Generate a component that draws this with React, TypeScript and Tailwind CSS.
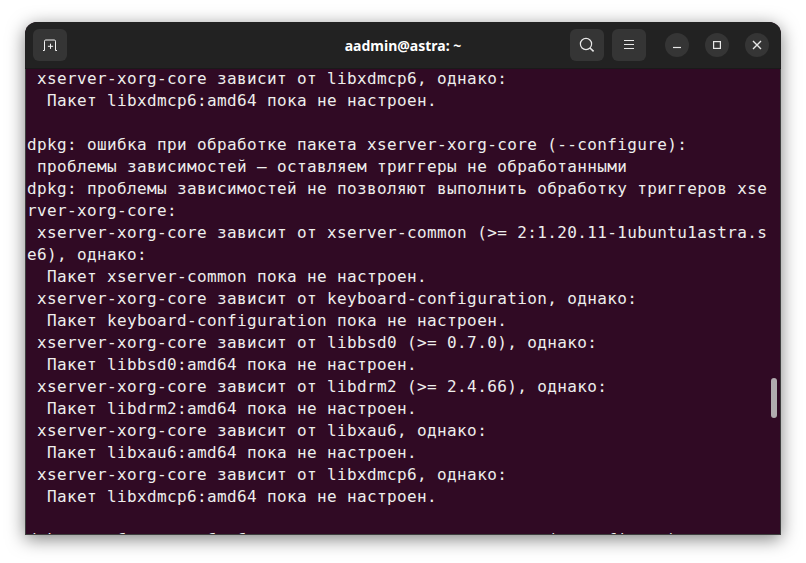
const lines = [
  " xserver-xorg-core зависит от libxdmcp6, однако:",
  "  Пакет libxdmcp6:amd64 пока не настроен.",
  "",
  "dpkg: ошибка при обработке пакета xserver-xorg-core (--configure):",
  " проблемы зависимостей — оставляем триггеры не обработанными",
  "dpkg: проблемы зависимостей не позволяют выполнить обработку триггеров xse",
  "rver-xorg-core:",
  " xserver-xorg-core зависит от xserver-common (>= 2:1.20.11-1ubuntu1astra.s",
  "e6), однако:",
  "  Пакет xserver-common пока не настроен.",
  " xserver-xorg-core зависит от keyboard-configuration, однако:",
  "  Пакет keyboard-configuration пока не настроен.",
  " xserver-xorg-core зависит от libbsd0 (>= 0.7.0), однако:",
  "  Пакет libbsd0:amd64 пока не настроен.",
  " xserver-xorg-core зависит от libdrm2 (>= 2.4.66), однако:",
  "  Пакет libdrm2:amd64 пока не настроен.",
  " xserver-xorg-core зависит от libxau6, однако:",
  "  Пакет libxau6:amd64 пока не настроен.",
  " xserver-xorg-core зависит от libxdmcp6, однако:",
  "  Пакет libxdmcp6:amd64 пока не настроен.",
  "",
];

export default function App() {
  return (
    <div className="w-[806px] h-[563px] bg-white pt-[22px] pl-[25px] overflow-hidden">
      <div className="w-[756px] h-[513px] flex flex-col rounded-t-[12px] bg-[#300a24] shadow-[0_4px_18px_rgba(0,0,0,0.5)]">
        <header className="h-[47px] shrink-0 rounded-t-[12px] bg-[#222222] border-b border-[#1a1a1a] grid grid-cols-[1fr_auto_1fr] items-center pl-2 pr-3">
          <div className="flex">
            <button className="w-[34px] h-[32px] rounded-[6px] bg-[#353535] flex items-center justify-center">
              <svg width="16" height="16" viewBox="0 0 16 16" fill="none" stroke="#f2f2f2" strokeWidth="1">
                <path d="M1 13.5h1.5V4.2q0-1.2 1.2-1.2h8.6q1.2 0 1.2 1.2v9.3H15" />
                <path d="M8.5 6.7v5.2M5.9 9.3h5.2" />
              </svg>
            </button>
          </div>
          <div className="text-center text-white text-[14px] font-bold font-['Noto_Sans',sans-serif] pl-[4px]">aadmin@astra: ~</div>
          <div className="flex items-center justify-end">
            <button className="w-[34px] h-[32px] rounded-[6px] bg-[#353535] flex items-center justify-center">
              <svg width="16" height="16" viewBox="0 0 16 16" fill="none" stroke="#e8e8e8" strokeWidth="1.2">
                <circle cx="7" cy="7" r="5.6" />
                <path d="M11 11l3.6 3.4" strokeWidth="1.6" />
              </svg>
            </button>
            <button className="ml-2 w-[34px] h-[32px] rounded-[6px] bg-[#353535] flex items-center justify-center">
              <svg width="12" height="10" viewBox="0 0 12 10" fill="none" stroke="#e8e8e8" strokeWidth="1">
                <path d="M1 .5h10M1 4.5h10M1 8.5h10" />
              </svg>
            </button>
            <button className="ml-[19px] w-6 h-6 rounded-full bg-[#353535] flex items-center justify-center">
              <svg width="10" height="10" viewBox="0 0 10 10" fill="none" stroke="#e8e8e8" strokeWidth="1.2">
                <path d="M1 7.5h8" />
              </svg>
            </button>
            <button className="ml-4 w-6 h-6 rounded-full bg-[#353535] flex items-center justify-center">
              <svg width="10" height="10" viewBox="0 0 10 10" fill="none" stroke="#e8e8e8" strokeWidth="1.2">
                <rect x="1.6" y="1.6" width="6.8" height="6.8" />
              </svg>
            </button>
            <button className="ml-4 w-6 h-6 rounded-full bg-[#353535] flex items-center justify-center">
              <svg width="10" height="10" viewBox="0 0 10 10" fill="none" stroke="#e8e8e8" strokeWidth="1.4">
                <path d="M1 1l8 8M9 1l-8 8" />
              </svg>
            </button>
          </div>
        </header>
        <main className="relative flex-1 overflow-hidden border-x border-b border-[#3e3e3e] pl-px text-[#eeeeec] font-['DejaVu_Sans_Mono',monospace] text-[16px] tracking-[0.37px] leading-[22px]">
          <div className="-mt-px">
            {lines.map((l, i) => (
              <div key={i} className="h-[22px] whitespace-pre">{l}</div>
            ))}
            <div className="-mt-px h-[22px] whitespace-pre">dpkg: ошибка при обработке пакета xserver-xorg-core (--configure):</div>
          </div>
          <div className="absolute right-[3px] top-[309px] w-[6px] h-[40px] rounded-full bg-[#b0abae]" />
        </main>
      </div>
    </div>
  );
}
